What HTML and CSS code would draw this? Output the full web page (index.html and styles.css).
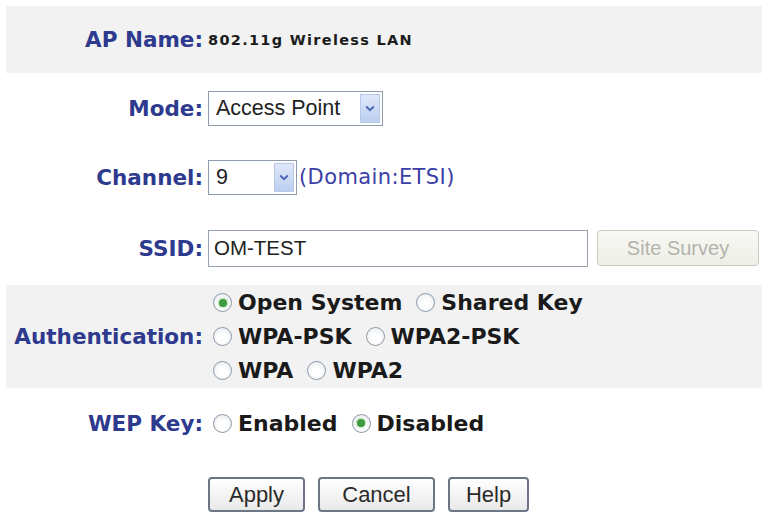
FILE: index.html
```html
<!DOCTYPE html>
<html lang="en">
<head>
    <meta charset="UTF-8">
    <title>Wireless Settings</title>
    <link rel="stylesheet" href="styles.css">
</head>
<body>
    <div class="form">
        <div class="row band row-name">
            <div class="label">AP Name:</div>
            <div class="field"><span class="ap-name">802.11g Wireless LAN</span></div>
        </div>
        <div class="row row-mode">
            <div class="label">Mode:</div>
            <div class="field">
                <span class="select select-mode">
                    <span class="select-text">Access Point</span>
                    <span class="select-arrow"><svg width="10" height="7" viewBox="0 0 10 7"><path d="M1.2 1.5 L5 5.2 L8.8 1.5" fill="none" stroke="#4a66b6" stroke-width="2"/></svg></span>
                </span>
            </div>
        </div>
        <div class="row row-channel">
            <div class="label">Channel:</div>
            <div class="field">
                <span class="select select-channel">
                    <span class="select-text">9</span>
                    <span class="select-arrow"><svg width="10" height="7" viewBox="0 0 10 7"><path d="M1.2 1.5 L5 5.2 L8.8 1.5" fill="none" stroke="#4a66b6" stroke-width="2"/></svg></span>
                </span>
                <span class="domain">(Domain:ETSI)</span>
            </div>
        </div>
        <div class="row row-ssid">
            <div class="label">SSID:</div>
            <div class="field">
                <span class="text-input">OM-TEST</span>
                <button class="btn-survey" disabled>Site Survey</button>
            </div>
        </div>
        <div class="row band row-auth">
            <div class="label">Authentication:</div>
            <div class="field options">
                <div class="opt-line">
                    <span class="opt"><span class="radio checked"></span>Open System</span>
                    <span class="opt"><span class="radio"></span>Shared Key</span>
                </div>
                <div class="opt-line">
                    <span class="opt"><span class="radio"></span>WPA-PSK</span>
                    <span class="opt"><span class="radio"></span>WPA2-PSK</span>
                </div>
                <div class="opt-line">
                    <span class="opt"><span class="radio"></span>WPA</span>
                    <span class="opt"><span class="radio"></span>WPA2</span>
                </div>
            </div>
        </div>
        <div class="row row-wep">
            <div class="label">WEP Key:</div>
            <div class="field">
                <span class="opt"><span class="radio"></span>Enabled</span>
                <span class="opt"><span class="radio checked"></span>Disabled</span>
            </div>
        </div>
        <div class="buttons">
            <button class="btn btn-apply">Apply</button>
            <button class="btn btn-cancel">Cancel</button>
            <button class="btn btn-help">Help</button>
        </div>
    </div>
</body>
</html>
```

FILE: styles.css
```css
body {
    margin: 6px;
    background-color: #fff;
    font-family: "DejaVu Sans", Verdana, sans-serif;
}
.form {
    width: 756px;
}
.row {
    display: flex;
    align-items: center;
}
.band {
    background-color: #f2f2f2;
}
.label {
    width: 197px;
    margin-right: 5px;
    text-align: right;
    font-weight: bold;
    font-size: 21.5px;
    color: #2d3a8e;
    flex-shrink: 0;
}
.field {
    display: flex;
    align-items: center;
}
.row-name {
    height: 67px;
}
.row-mode {
    height: 70px;
}
.row-channel {
    height: 68px;
}
.row-ssid {
    height: 74px;
}
.row-auth {
    height: 103px;
}
.row-wep {
    height: 70px;
}
.ap-name {
    font-weight: bold;
    font-size: 14.5px;
    letter-spacing: 1.3px;
    color: #1c1c1c;
}

/* dropdowns */
.select {
    display: flex;
    align-items: center;
    justify-content: space-between;
    box-sizing: border-box;
    height: 35px;
    border: 1px solid #8e9bad;
    background-color: #fff;
    padding: 0 2px 0 7px;
    font-family: "Liberation Sans", Arial, sans-serif;
    font-size: 21.5px;
    color: #222;
}
.select-mode {
    width: 175px;
}
.select-channel {
    width: 89px;
}
.select-arrow {
    display: flex;
    align-items: center;
    justify-content: center;
    width: 20px;
    height: 29px;
    box-sizing: border-box;
    border: 1px solid #b7c9ea;
    background: linear-gradient(#dfe8f9, #bccff1);
}
.domain {
    margin-left: 2px;
    font-size: 21px;
    letter-spacing: 0.4px;
    color: #3b40a6;
}

/* ssid */
.text-input {
    display: flex;
    align-items: center;
    box-sizing: border-box;
    width: 380px;
    height: 37px;
    padding-left: 5px;
    border: 1px solid #98a3b0;
    font-family: "Liberation Sans", Arial, sans-serif;
    font-size: 20.5px;
    color: #222;
}
.btn-survey {
    margin-left: 9px;
    width: 162px;
    height: 36px;
    border: 1px solid #cacbc0;
    border-radius: 4px;
    background: linear-gradient(#f8f8f4, #efefe8);
    font-family: "Liberation Sans", Arial, sans-serif;
    font-size: 20px;
    color: #b3b3ab;
}

/* radios */
.options {
    flex-direction: column;
    align-items: flex-start;
}
.opt-line {
    display: flex;
    align-items: center;
    height: 34px;
}
.opt {
    display: inline-flex;
    align-items: center;
    margin-right: 9px;
    font-weight: bold;
    font-size: 22px;
    color: #1a1a1a;
}
.radio {
    display: inline-flex;
    align-items: center;
    justify-content: center;
    box-sizing: border-box;
    width: 19px;
    height: 19px;
    margin: 0 6px 0 5px;
    border: 1px solid #8c9aa8;
    border-radius: 50%;
    background: radial-gradient(circle at 50% 60%, #ffffff 30%, #e4e6ea 100%);
}
.radio.checked::after {
    content: "";
    width: 8px;
    height: 8px;
    border-radius: 50%;
    background-color: #3f9b3f;
    box-shadow: 0 0 2px 1px #b6e0b0;
}

/* bottom buttons */
.buttons {
    display: flex;
    gap: 13px;
    padding: 19px 0 0 202px;
}
.btn {
    height: 35px;
    border: 2px solid #6c7684;
    border-radius: 4px;
    background: linear-gradient(#ffffff, #e9e9e9);
    font-family: "Liberation Sans", Arial, sans-serif;
    font-size: 22px;
    color: #2a2a2a;
}
.btn-apply {
    width: 97px;
}
.btn-cancel {
    width: 117px;
}
.btn-help {
    width: 81px;
}
```
